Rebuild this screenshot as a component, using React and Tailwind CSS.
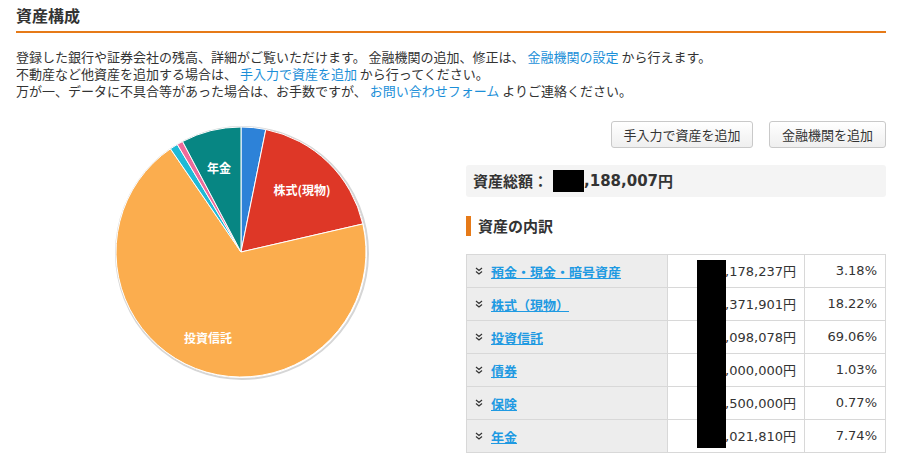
import React from "react";

const slices = [
  { name: "預金・現金・暗号資産", pct: 3.18, color: "#2d82d8", value: ",178,237円" },
  { name: "株式（現物）", pct: 18.22, color: "#de3727", value: ",371,901円" },
  { name: "投資信託", pct: 69.06, color: "#fbad4e", value: ",098,078円" },
  { name: "債券", pct: 1.03, color: "#1fbad6", value: ",000,000円" },
  { name: "保険", pct: 0.77, color: "#ee6a9a", value: ",500,000円" },
  { name: "年金", pct: 7.74, color: "#078683", value: ",021,810円" },
];

function Pie() {
  const cx = 130, cy = 130, r = 125;
  let start = -90;
  const paths = slices.map((s) => {
    const sweep = (s.pct / 100) * 360;
    const a0 = (start * Math.PI) / 180;
    const a1 = ((start + sweep) * Math.PI) / 180;
    start += sweep;
    const x0 = cx + r * Math.cos(a0), y0 = cy + r * Math.sin(a0);
    const x1 = cx + r * Math.cos(a1), y1 = cy + r * Math.sin(a1);
    const large = sweep > 180 ? 1 : 0;
    return (
      <path
        key={s.name}
        d={`M${cx},${cy} L${x0},${y0} A${r},${r} 0 ${large} 1 ${x1},${y1} Z`}
        fill={s.color}
        stroke="#ffffff"
        strokeWidth="1"
        strokeLinejoin="round"
      />
    );
  });
  return (
    <svg width="260" height="260" viewBox="0 0 260 260">
      <circle cx={cx + 1} cy={cy + 1} r={r + 1} fill="none" stroke="#d6d6d6" strokeWidth="2" />
      {paths}
      <g fill="#ffffff" fontSize="12" fontWeight="700" textAnchor="middle" style={{ fontFamily: "'Noto Sans CJK JP', sans-serif" }}>
        <text x="108" y="51">年金</text>
        <text x="191" y="73">株式(現物)</text>
        <text x="97" y="221">投資信託</text>
      </g>
    </svg>
  );
}

function Chevron() {
  return (
    <svg width="8" height="8" viewBox="0 0 8 8" className="shrink-0">
      <path d="M1 1 L4 3.5 L7 1 M1 4.5 L4 7 L7 4.5" fill="none" stroke="#333" strokeWidth="1.2" />
    </svg>
  );
}

export default function App() {
  return (
    <div className="w-[870px] ml-4 text-[#333] font-['Noto_Sans_CJK_JP',sans-serif]">
      <h1 className="text-[16px] font-bold leading-[22px] pt-[4px] pb-[5px]">資産構成</h1>
      <div className="h-[2px] bg-[#e67a18]" />
      <div className="mt-[15px] text-[13px] leading-[17px]">
        <p>
          登録した銀行や証券会社の残高、詳細がご覧いただけます。 金融機関の追加、修正は、{" "}
          <a className="text-[#1b8fd8]">金融機関の設定</a> から行えます。
        </p>
        <p>
          不動産など他資産を追加する場合は、 <a className="text-[#1b8fd8]">手入力で資産を追加</a> から行ってください。
        </p>
        <p>
          万が一、データに不具合等があった場合は、お手数ですが、 <a className="text-[#1b8fd8]">お問い合わせフォーム</a> よりご連絡ください。
        </p>
      </div>
      <div className="flex mt-[22px]">
        <div className="w-[450px]">
          <div className="ml-[95px] mt-[1px]">
            <Pie />
          </div>
        </div>
        <div className="w-[420px]">
          <div className="flex justify-end gap-[16px]">
            <button className="h-[27px] w-[142px] rounded-[3px] border border-[#c9c9c9] bg-gradient-to-b from-white to-[#efefef] text-[13px] text-[#333]">
              手入力で資産を追加
            </button>
            <button className="h-[27px] w-[117px] rounded-[3px] border border-[#c9c9c9] bg-gradient-to-b from-white to-[#efefef] text-[13px] text-[#333]">
              金融機関を追加
            </button>
          </div>
          <div className="mt-[17px] h-[32px] rounded-[3px] bg-[#f4f4f4] pl-[7px] flex items-center text-[15px] font-bold">
            <span>資産総額：</span>
            <span className="inline-block w-[31px] h-[22px] bg-black ml-[5px]" />
            <span className="font-['DejaVu_Sans','Noto_Sans_CJK_JP',sans-serif]">,188,007</span>
            <span>円</span>
          </div>
          <div className="mt-[19px] h-[20px] flex items-center border-l-[5px] border-[#e67a18] pl-[7px] text-[15px] font-bold">
            資産の内訳
          </div>
          <div className="relative mt-[18px]">
            <table className="w-full border-collapse text-[13px]">
              <tbody>
                {slices.map((s) => (
                  <tr key={s.name} className="h-[33px]">
                    <td className="w-[201px] bg-[#ededed] border border-[#d8d8d8] pl-[8px] p-0">
                      <div className="flex items-center gap-[8px]">
                        <Chevron />
                        <a className="text-[#1f9ae2] font-bold underline leading-[17px]">{s.name}</a>
                      </div>
                    </td>
                    <td className="w-[137px] border border-[#d8d8d8] text-right pr-[8px] font-['DejaVu_Sans','Noto_Sans_CJK_JP',sans-serif]">
                      {s.value.replace("円", "")}
                      <span className="font-['Noto_Sans_CJK_JP',sans-serif]">円</span>
                    </td>
                    <td className="border border-[#d8d8d8] text-right pr-[8px] font-['DejaVu_Sans',sans-serif]">
                      {s.pct.toFixed(2)}%
                    </td>
                  </tr>
                ))}
              </tbody>
            </table>
            <div className="absolute left-[231px] top-[6px] w-[29px] h-[188px] bg-black" />
          </div>
        </div>
      </div>
    </div>
  );
}
